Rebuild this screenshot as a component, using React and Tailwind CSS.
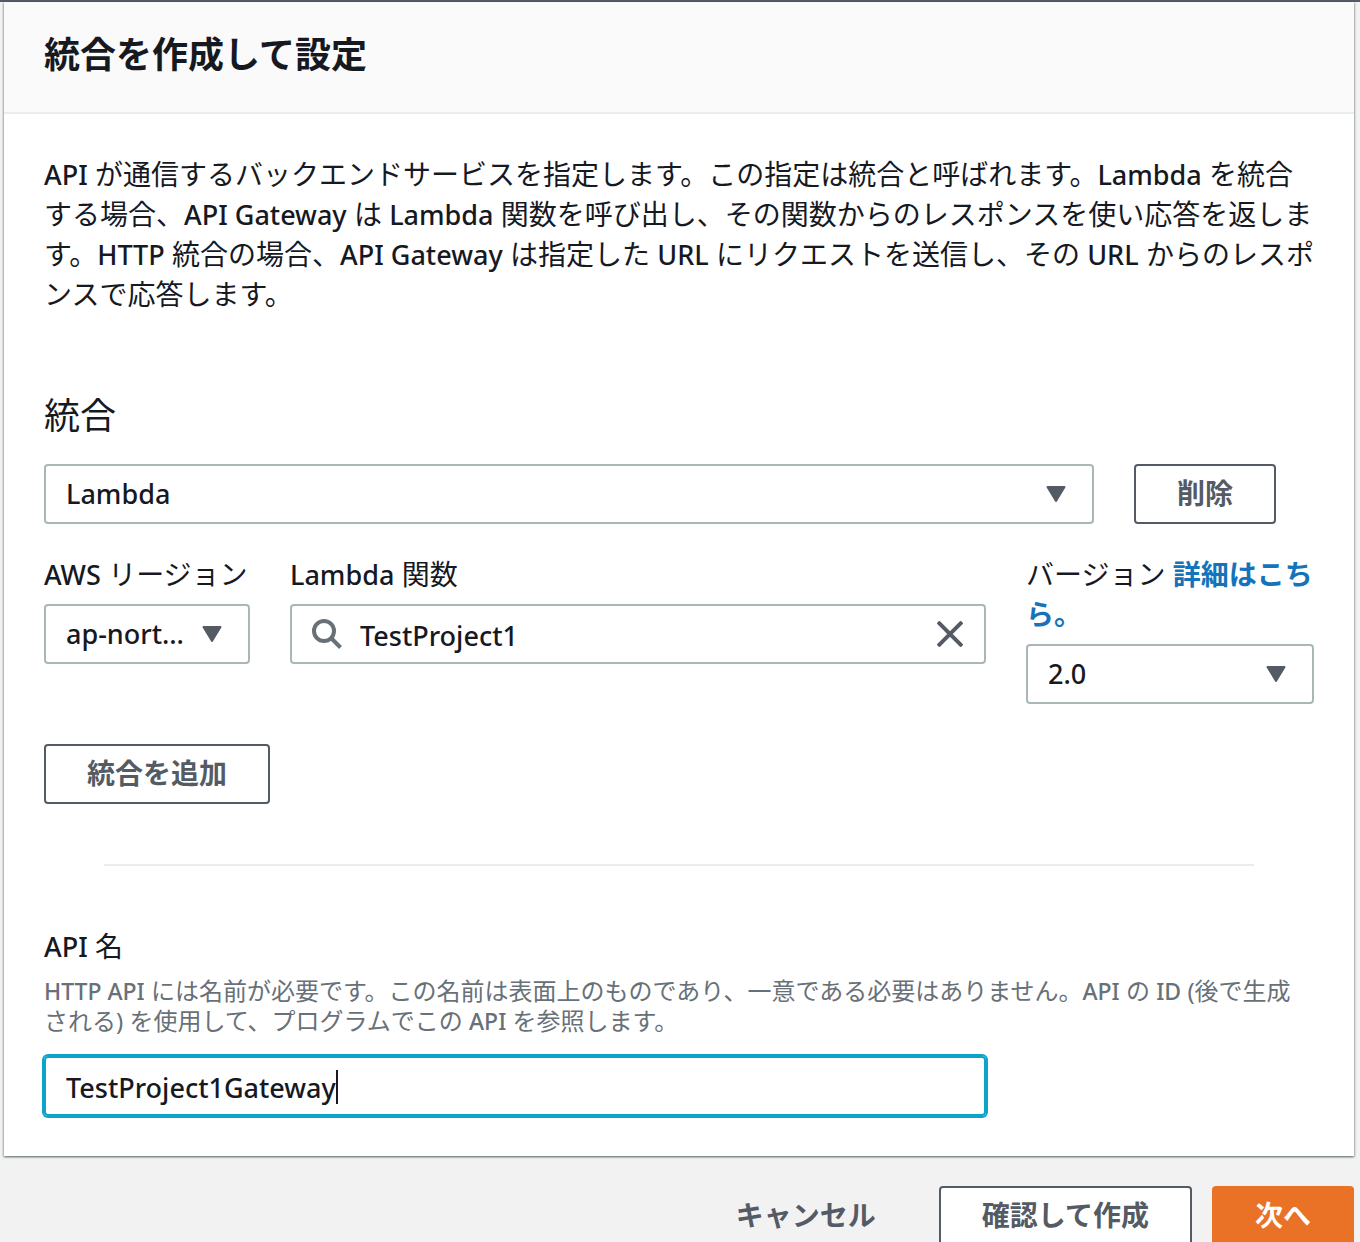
import { useState } from 'react'

// Latin words are set a little smaller and heavier than the Japanese around them
function Mixed({ children, latin = 'text-[27px]' }) {
  return children.split(/([A-Za-z]+(?: [A-Za-z]+)*)/).map((part, i) =>
    i % 2 ? <span key={i} className={`${latin} leading-none font-medium`}>{part}</span> : part
  )
}

function Caret() {
  return (
    <svg viewBox="0 0 20 16" className="w-5 h-4 absolute right-7 top-1/2 -translate-y-1/2 pointer-events-none" aria-hidden="true">
      <path d="M1.5 1h17L10 15z" fill="#545b64" stroke="#545b64" strokeWidth="2" strokeLinejoin="round" />
    </svg>
  )
}

function Select({ id, options, className = '', label }) {
  return (
    <div className={`relative ${className}`}>
      <select
        id={id}
        aria-label={label}
        className="appearance-none block w-full h-[60px] pl-5 pr-14 truncate bg-white border-2 border-[#aab7b8] rounded-sm text-[27px] font-medium"
      >
        {options.map((o) => (
          <option key={o}>{o}</option>
        ))}
      </select>
      <Caret />
    </div>
  )
}

function Button({ children }) {
  return (
    <button
      type="button"
      className="h-[60px] px-[41px] pb-[2px] bg-white border-2 border-[#545b64] rounded-sm leading-10 font-bold text-[#545b64] whitespace-nowrap"
    >
      {children}
    </button>
  )
}

export default function App() {
  const [fn, setFn] = useState('TestProject1')
  const [name, setName] = useState('TestProject1Gateway')

  return (
    <div lang="ja" className="min-h-screen bg-[#f2f2f2] border-t-2 border-[#545b64] pl-1 pr-[6px] font-['Noto_Sans','Noto_Sans_CJK_JP',sans-serif] text-[28px] leading-10 text-[#16191f]">
      <main className="bg-white shadow-[0_1px_2px_0_rgba(0,28,36,0.4),1px_1px_2px_0_rgba(0,28,36,0.2),-1px_1px_2px_0_rgba(0,28,36,0.2)]">
        <header className="bg-[#fafafa] border-b-2 border-[#eaeded] px-10 pt-[31px] pb-[35px]">
          <h1 className="text-[36px] leading-[44px] font-bold">統合を作成して設定</h1>
        </header>

        <div className="p-10">
          <p className="-mr-4">
            <Mixed>API が通信するバックエンドサービスを指定します。この指定は統合と呼ばれます。Lambda を統合</Mixed>
            <br />
            <Mixed>する場合、API Gateway は Lambda 関数を呼び出し、その関数からのレスポンスを使い応答を返しま</Mixed>
            <br />
            <Mixed>す。HTTP 統合の場合、API Gateway は指定した URL にリクエストを送信し、その URL からのレスポ</Mixed>
            <br />
            ンスで応答します。
          </p>

          <h2 className="mt-20 text-[36px] leading-[44px]">統合</h2>

          <div className="mt-[26px] flex gap-10 pr-[38px]">
            <Select label="統合" options={['Lambda']} className="flex-1" />
            <Button>削除</Button>
          </div>

          <div className="mt-[30px] grid grid-cols-[206fr_696fr_288fr] gap-10 items-start">
            <div className="min-w-0">
              <label htmlFor="region" className="block whitespace-nowrap"><Mixed>AWS リージョン</Mixed></label>
              <Select id="region" options={['ap-northeast-1']} className="mt-[10px]" />
            </div>
            <div className="min-w-0">
              <label htmlFor="fn" className="block"><Mixed>Lambda 関数</Mixed></label>
              <div className="mt-[10px] h-[60px] flex items-center pl-5 pr-[21px] border-2 border-[#aab7b8] rounded-sm">
                <svg viewBox="0 0 30 30" className="w-[30px] h-[30px] shrink-0" fill="none" stroke="#687078" strokeWidth="4" aria-hidden="true">
                  <circle cx="12" cy="12" r="10" />
                  <path d="M19 19l9.5 9.5" />
                </svg>
                <input
                  id="fn"
                  value={fn}
                  onChange={(e) => setFn(e.target.value)}
                  className="flex-1 min-w-0 ml-[18px] pt-[3px] text-[27px] font-medium outline-none"
                />
                <button type="button" aria-label="クリア" onClick={() => setFn('')}>
                  <svg viewBox="0 0 26 26" className="w-[26px] h-[26px]" stroke="#545b64" strokeWidth="4" aria-hidden="true">
                    <path d="M1 1l24 24M25 1L1 25" />
                  </svg>
                </button>
              </div>
            </div>
            <div className="min-w-0">
              <div>
                <label htmlFor="version">バージョン</label>{' '}
                <a href="#version" className="font-bold text-[#1473bb]">詳細はこちら。</a>
              </div>
              <Select id="version" options={['2.0', '1.0']} className="mt-[10px]" />
            </div>
          </div>

          <div className="mt-10 flex">
            <Button>統合を追加</Button>
          </div>

          <hr className="mt-[60px] mx-[60px] border-t-2 border-[#eaeded]" />

          <label htmlFor="name" className="block mt-[60px]"><Mixed>API 名</Mixed></label>
          <p id="name-hint" className="mt-[10px] text-2xl leading-[30px] text-[#687078]">
            <Mixed latin="text-[23px]">HTTP API には名前が必要です。この名前は表面上のものであり、一意である必要はありません。API の ID (後で生成</Mixed>
            <br />
            <Mixed latin="text-[23px]">される) を使用して、プログラムでこの API を参照します。</Mixed>
          </p>
          <div className="relative mt-5 mr-[328px]">
            <input
              id="name"
              aria-describedby="name-hint"
              value={name}
              onChange={(e) => setName(e.target.value)}
              className="block w-full h-[60px] px-5 pt-[2px] border-2 border-[#0ca3cb] ring-2 ring-[#0ca3cb] rounded-sm text-[27px] font-medium caret-transparent outline-none"
            />
            <span className="absolute left-[292px] top-[14px] w-[2px] h-[34px] bg-[#16191f]" />
          </div>
        </div>
      </main>

      <footer className="pt-[30px] flex justify-end items-center gap-5">
        <button type="button" className="h-[60px] px-[43px] pb-[2px] font-bold text-[#545b64]">キャンセル</button>
        <Button>確認して作成</Button>
        <button type="button" className="h-[60px] px-[43px] pb-[2px] rounded-sm bg-[#e97226] font-bold text-white">次へ</button>
      </footer>
    </div>
  )
}
